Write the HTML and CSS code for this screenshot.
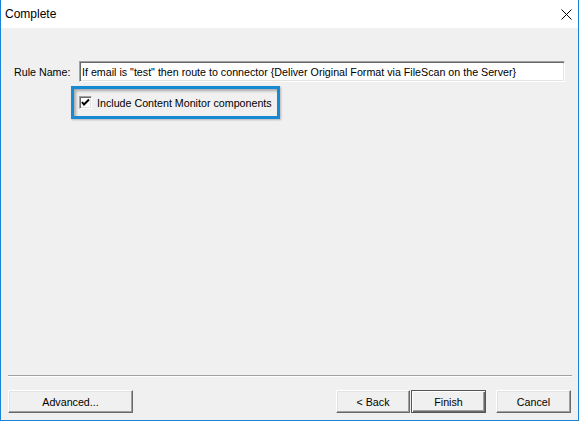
FILE: index.html
```html
<!DOCTYPE html>
<html>
<head>
<meta charset="utf-8">
<link rel="stylesheet" href="styles.css">
</head>
<body>
<div class="window">
  <div class="titlebar">
    <span class="title">Complete</span>
    <svg class="close" width="11" height="11" viewBox="0 0 11 11">
      <path d="M0.5 0.5 L10.5 10.5 M10.5 0.5 L0.5 10.5" stroke="#000" stroke-width="1" fill="none"/>
    </svg>
  </div>
  <div class="content">
    <div class="rule-row">
      <label class="rule-label">Rule Name:</label>
      <div class="textbox">If email is "test" then route to connector {Deliver Original Format via FileScan on the Server}</div>
    </div>
    <div class="check-row">
      <div class="highlight">
        <span class="checkbox">
          <svg width="9" height="9" viewBox="0 0 9 9"><path d="M1 4 L3 6.5 L8 1.5" stroke="#000" stroke-width="2" fill="none"/></svg>
        </span>
        <span class="check-label">Include Content Monitor components</span>
      </div>
    </div>
  </div>
  <div class="footer">
    <div class="separator"></div>
    <div class="buttons">
      <button class="btn btn-advanced">Advanced...</button>
      <button class="btn btn-back">&lt; Back</button>
      <button class="btn btn-finish">Finish</button>
      <button class="btn btn-cancel">Cancel</button>
    </div>
  </div>
</div>
</body>
</html>
```

FILE: styles.css
```css
* { box-sizing: border-box; }
html, body {
  margin: 0;
  padding: 0;
  background: #f0f0f0;
}
.window {
  width: 579px;
  height: 421px;
  border: 1px solid #1883d7;
  border-top: none;
  background: #f0f0f0;
  display: flex;
  flex-direction: column;
  font-family: "Liberation Sans", Arial, sans-serif;
  font-size: 10.7px;
  color: #000;
}
.titlebar {
  height: 28px;
  background: #fff;
  display: flex;
  align-items: center;
  padding-left: 4px;
  padding-right: 6px;
  flex: none;
}
.title {
  font-size: 12px;
  line-height: 28px;
}
.close {
  margin-left: auto;
  display: block;
}
.content {
  padding-top: 33px;
  flex: 1;
}
.rule-row {
  display: flex;
  align-items: center;
  padding-left: 13px;
}
.rule-label {
  width: 65px;
  padding-top: 1px;
}
.textbox {
  width: 486px;
  height: 21px;
  background: #fff;
  border-style: solid;
  border-width: 1px;
  border-color: #a0a0a0 #ffffff #ffffff #a0a0a0;
  box-shadow: inset 1px 1px 0 #696969, inset -1px -1px 0 #e3e3e3;
  padding: 3px 0 0 2px;
  white-space: nowrap;
  overflow: hidden;
  line-height: 14px;
}
.check-row {
  margin-top: 4px;
  margin-left: 70px;
  display: flex;
}
.highlight {
  width: 209px;
  height: 33px;
  border: 3px solid #168bd3;
  display: flex;
  align-items: center;
  padding-left: 5px;
  box-shadow: inset 2px 2px 3px rgba(0,0,0,0.3), 1px 1px 2px rgba(0,0,0,0.25);
}
.checkbox {
  width: 13px;
  height: 13px;
  background: #fff;
  border-style: solid;
  border-width: 1px;
  border-color: #a0a0a0 #ffffff #ffffff #a0a0a0;
  box-shadow: inset 1px 1px 0 #696969, inset -1px -1px 0 #e3e3e3;
  display: flex;
  align-items: center;
  justify-content: center;
  flex: none;
}
.checkbox svg { display: block; }
.check-label {
  margin-left: 5px;
  white-space: nowrap;
}
.footer {
  flex: none;
  padding-bottom: 7px;
}
.separator {
  margin: 0 6px 0 7px;
  border-top: 1px solid #a0a0a0;
  border-bottom: 1px solid #ffffff;
}
.buttons {
  display: flex;
  margin-top: 13px;
  padding: 0 7px;
}
.btn {
  height: 23px;
  font-family: "Liberation Sans", Arial, sans-serif;
  font-size: 10.7px;
  color: #000;
  background: #f0f0f0;
  border-style: solid;
  border-width: 1px;
  border-color: #ffffff #696969 #696969 #ffffff;
  box-shadow: inset -1px -1px 0 #a0a0a0, inset 1px 1px 0 #e3e3e3;
  padding: 0;
  margin: 0;
}
.btn-advanced { width: 125px; }
.btn-back { width: 74px; margin-left: auto; }
.btn-finish {
  width: 75px;
  margin-left: 1px;
  border: 1px solid #555;
  box-shadow: inset 1px 1px 0 #ffffff, inset -1px -1px 0 #696969, inset -2px -2px 0 #a0a0a0;
}
.btn-cancel { width: 75px; margin-left: 10px; }
```
